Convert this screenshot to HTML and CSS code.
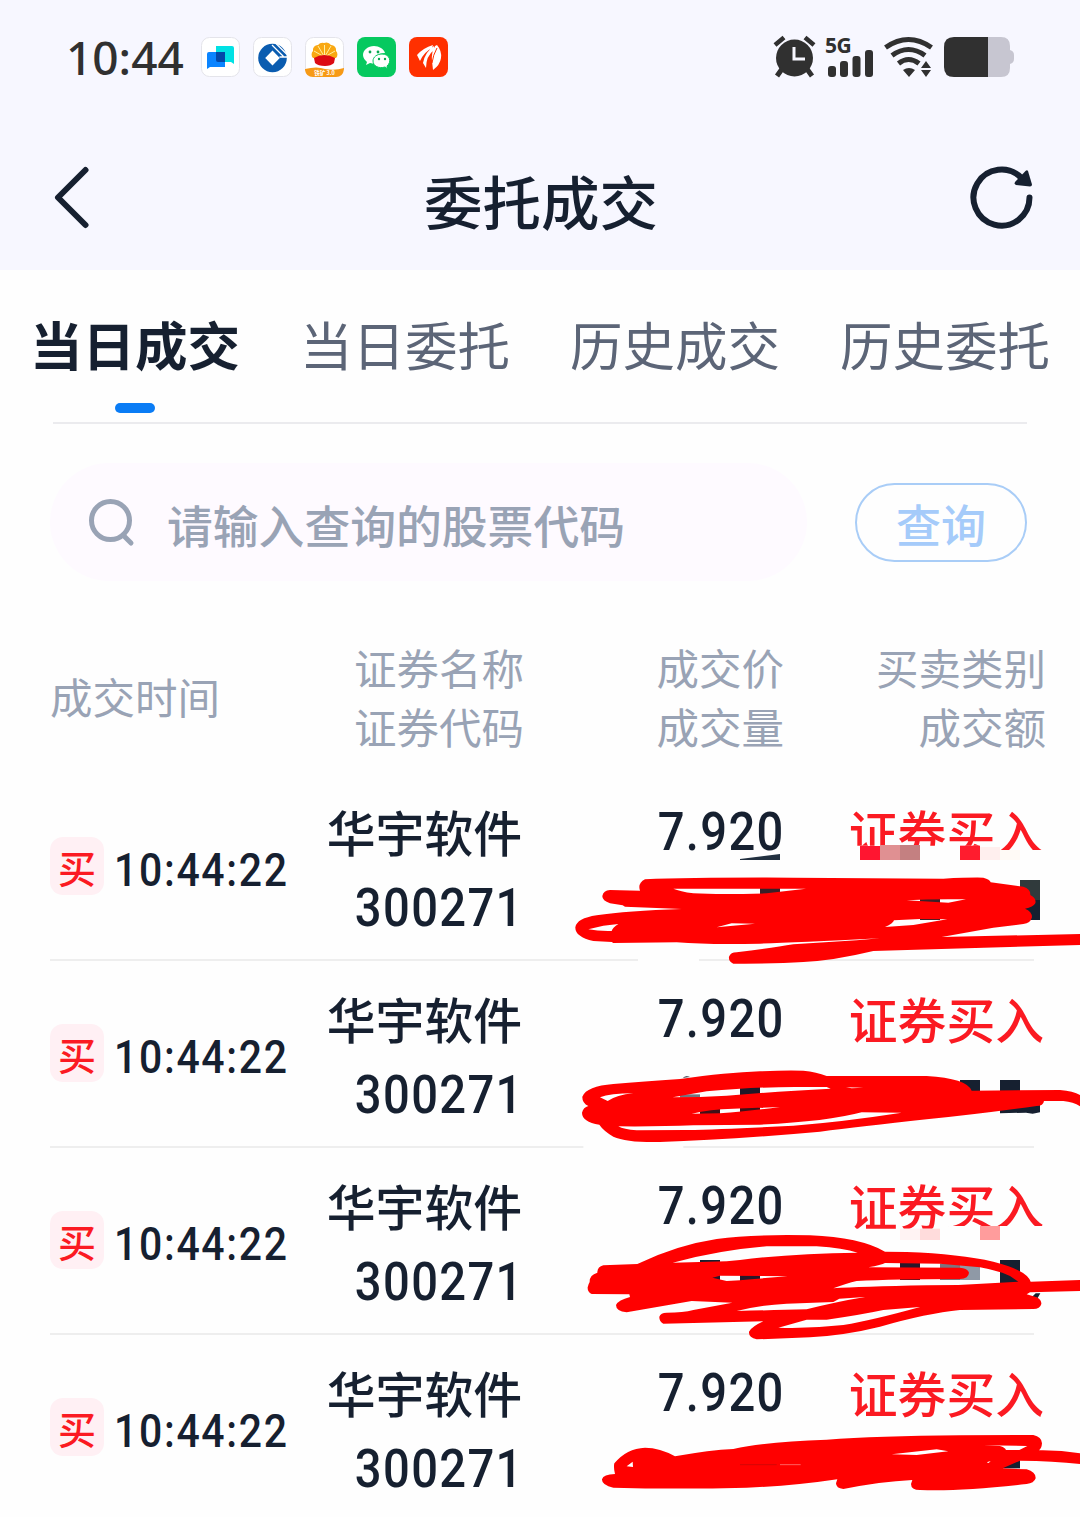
FILE: index.html
```html
<!DOCTYPE html>
<html lang="zh-CN">
<head>
<meta charset="utf-8">
<title>委托成交</title>
<link rel="stylesheet" href="styles.css">
</head>
<body>
<div class="screen">
  <header class="header">
    <div class="status">
      <span class="clock">10:44</span>
      <div class="apps">
        <svg class="app" viewBox="0 0 40 40"><rect x=".5" y=".5" width="38" height="39" rx="8" fill="#fff" stroke="#e4e4ea"/><path d="M15 9h16q2 0 2 2v16l-3-2H15z" fill="#00e1e4"/><path d="M8 15h16v15H9l-3 2V17q0-2 2-2z" fill="#0a84ff"/><path d="M15 15h9v10h-7q-2 0-2-2z" fill="#0348a8"/></svg>
        <svg class="app" viewBox="0 0 40 40"><rect x=".5" y=".5" width="38" height="39" rx="8" fill="#fff" stroke="#e4e4ea"/><circle cx="19.500" cy="21" r="14.300" fill="#0a5cb0"/><path d="M19.500 13.500l7.300 7.500-7.300 7.500-7.300-7.500z" fill="#fff"/><path d="M26.500 20H36M19 8L30.500 19.500M22.500 6L34 17.500" stroke="#fff" stroke-width="1.300"/></svg>
        <svg class="app" viewBox="0 0 40 40"><rect x=".5" y=".5" width="38" height="39" rx="8" fill="#fff" stroke="#e4e4ea"/><path d="M8 21a5 5 0 0 1 0-7 5 5 0 0 1 5-6 6 6 0 0 1 6-2 6 6 0 0 1 7 2 5 5 0 0 1 5 6 5 5 0 0 1 0 7z" fill="#f9a812"/><path d="M19.500 20V8M19.500 20L13 9M19.500 20L26 9M19.500 20L9 14M19.500 20L30 14" stroke="#fff0a0" stroke-width="1"/><path d="M9 21q10-6 21 0l-1 5q-3 3-9 3-7 0-10-3z" fill="#dc0b13"/><path d="M0 32q12-3 20 0 10 2 19-1v1q-1 8-8 8H8q-7 0-8-7z" fill="#f79a16"/><text x="19.500" y="38.300" class="app-text">铁矿 3.0</text></svg>
        <svg class="app" viewBox="0 0 40 40"><rect width="39" height="40" rx="8" fill="#06c95f"/><path d="M17 9c-6 0-11 4-11 9 0 3 2 5 4 7l-1 3 4-2 5 1c-2-7 3-11 10-11-1-4-6-7-11-7z" fill="#fff"/><path d="M25 17c-5 0-9 3-9 7 0 5 6 8 12 6l3 2-1-3c5-4 3-12-5-12z" fill="#fff" stroke="#06c95f"/><circle cx="13" cy="15" r="1.400" fill="#08a850"/><circle cx="21" cy="15" r="1.400" fill="#08a850"/><circle cx="22" cy="22" r="1.200" fill="#08a850"/><circle cx="28" cy="22" r="1.200" fill="#08a850"/></svg>
        <svg class="app" viewBox="0 0 40 40"><rect width="39" height="40" rx="8" fill="#ff3000"/><path d="M24 8Q14 11 8 18l3 6q4-9 12-13zM25 9q-9 6-11 17l3 5q0-12 8-18zM26 9q-4 7-3 15l1 9q7-5 8-12 1-7-4-13z" fill="#fff"/><path d="M28 11q-4 7-5 15" stroke="#ff3000" fill="none"/></svg>
      </div>
      <div class="indicators">
        <svg class="signals" width="244" height="48" viewBox="0 0 244 48">
          <g fill="#303030">
            <circle cx="21.500" cy="25" r="18.500"/>
            <path d="M2 12L11 4.500M32 4.500l9 7.500" stroke="#303030" stroke-width="4.500"/>
            <path d="M9 36l-5 7M34 36l5 7" stroke="#303030" stroke-width="5"/>
            <path d="M21 14v12h11" fill="none" stroke="#f7f7ff" stroke-width="3"/>
            <text x="52" y="20" class="net">5G</text>
            <rect x="55" y="33" width="8" height="11" rx="3"/><rect x="67" y="28" width="8" height="16" rx="3"/><rect x="79.500" y="23" width="8" height="21" rx="3"/><rect x="92" y="17" width="8" height="27" rx="3"/>
            <path d="M112.500 14.500q23-16 46 0M119 22.500q16.500-12 33 0M125.500 30.500q10-8 20.500 0" fill="none" stroke="#303030" stroke-width="5"/>
            <path d="M130 37q6-4 12 0l-6 7zM148 35l5-7 5 7zM148 37h10l-5 7z"/>
          </g>
          <path d="M215 4h13q9 0 9 9v4q4 1 4 5v4q0 4-4 5v4q0 9-9 9h-13z" fill="#c7c6d1"/>
          <path d="M181 4h34v40h-34q-10 0-10-10V14q0-10 10-10z" fill="#303030"/>
        </svg>
      </div>
    </div>
    <div class="titlebar">
      <svg class="back" width="40" height="64" viewBox="0 0 40 64"><path d="M34.500 4L7 31.500 34.500 59" fill="none" stroke="#162030" stroke-width="6" stroke-linecap="round" stroke-linejoin="round"/></svg>
      <h1 class="title">委托成交</h1>
      <svg class="refresh" width="68" height="68" viewBox="0 0 68 68"><path d="M62.500 33.500A28 28 0 1 1 54.500 14" fill="none" stroke="#162030" stroke-width="6" stroke-linecap="round"/><path d="M61 7l4 13.500q0 2-2 2l-14-1.500q-2-1-1-3L58.500 7q1.500-1.500 2.500 0z" fill="#162030"/></svg>
    </div>
  </header>

  <nav class="tabs">
    <a class="tab active">当日成交</a>
    <a class="tab">当日委托</a>
    <a class="tab">历史成交</a>
    <a class="tab">历史委托</a>
  </nav>

  <div class="search">
    <div class="field">
      <svg width="48" height="50" viewBox="0 -1 48 50"><circle cx="22.500" cy="22.500" r="19" fill="none" stroke="#99a3b5" stroke-width="5"/><path d="M35 37l8 8" stroke="#99a3b5" stroke-width="5" stroke-linecap="round"/></svg>
      <span class="placeholder">请输入查询的股票代码</span>
    </div>
    <button class="query">查询</button>
  </div>

  <div class="cols head">
    <div class="left">成交时间</div>
    <div>证券名称<br>证券代码</div>
    <div>成交价<br>成交量</div>
    <div>买卖类别<br>成交额</div>
  </div>

  <main>
    <section class="cols row">
      <div class="when"><span class="badge">买</span><span class="time">10:44:22</span></div>
      <div class="cell"><span class="name">华宇软件</span><span class="num code">300271</span></div>
      <div class="cell"><span class="num">7.920</span></div>
      <div class="cell"><span class="name side">证券买入</span></div>
      <svg class="scribble" viewBox="0 -48 1560 561">
        <path d="M860 167H1300V180H1450V215H860zM234 503h183v14H234z" fill="#fefefe"/>
        <path d="M540 207L660 192V210H540z" fill="#223040"/>
        <path d="M900 168h60v42h-60z" fill="#ff1530"/><path d="M960 165h60v45h-60z" fill="#e09092"/><path d="M1020 165h60v45h-60z" fill="#c48081"/><path d="M1200 167h60v43h-60z" fill="#ff1c2e"/><path d="M1260 171h60v39h-60z" fill="#ffefee"/><path d="M1320 180h60v30h-60z" fill="#fffaf6"/>
        <path d="M1380 270h60v60h-60z" fill="#303a3c"/><path d="M1380 330h60v60h-60z" fill="#162030"/><path d="M600 290h60v25h-60zM1080 320h60v70h-60z" fill="#3a2028"/>
        <path class="ink" d="M255 268Q400 262 700 263L1150 266Q1230 262 1270 263Q1290 268 1292 277L1390 290Q1412 296 1411 315Q1430 325 1426 340Q1420 352 1395 356Q1416 364 1416 382Q1412 400 1390 402L1300 413 1145 441 1560 432V465L940 483Q820 512 730 516Q640 522 520 521Q505 515 507 500Q512 487 530 487Q640 473 700 463L890 451 960 445Q700 458 600 461Q450 465 350 457L160 459 155 456 100 453Q45 440 46 412Q50 385 110 376Q200 362 365 357L195 350 188 346 150 340Q126 332 127 318Q130 302 150 300L240 302Q232 280 255 268ZM340 296H738L620 310Q480 314 400 310Q360 304 340 296ZM85 418Q130 405 175 402Q158 412 155 423Q115 424 85 418ZM470 412L515 400 585 401ZM1040 331Q1120 326 1218 328L1165 338ZM975 411Q1000 400 1002 391L1080 387 1162 388 1060 405Z"/>
      </svg>
    </section>
    <section class="cols row">
      <div class="when"><span class="badge">买</span><span class="time">10:44:22</span></div>
      <div class="cell"><span class="name">华宇软件</span><span class="num code">300271</span></div>
      <div class="cell"><span class="num">7.920</span></div>
      <div class="cell"><span class="name side">证券买入</span></div>
      <svg class="scribble" viewBox="0 -57 1560 561">
        <path d="M70 494h300v12H70z" fill="#fefefe"/>
        <path d="M1200 300h60v40h-60zM1320 300h60v40h-60zM1320 365h120v32l-22 4-20-3-78 2zM368 293q10-8 22-2z" fill="#162030"/><path d="M360 343h60v10h-60z" fill="#707580"/><path d="M540 320h60v25h-60z" fill="#201828"/><path d="M420 385h60v20h-60zM540 380h60v20h-60z" fill="#401018"/>
        <path class="ink" d="M160 312Q250 305 360 297Q500 278 600 274Q680 270 730 272Q770 276 800 288H1100Q1220 295 1235 332L1500 330Q1540 333 1560 345V379Q1540 366 1510 363H1452Q1450 378 1430 378Q1250 403 1100 418Q900 440 780 455Q500 480 300 486Q200 488 160 470Q130 452 118 434Q66 425 66 398Q70 382 85 378Q66 370 67 350Q80 318 160 312ZM120 352Q150 340 220 340Q170 345 143 363ZM338 352L440 334Q600 320 720 321H800L812 326Q640 335 500 347L420 351ZM858 322L910 323 875 325ZM395 401Q450 387 520 386L660 381Q560 395 480 400ZM175 439Q300 440 400 436L600 434Q800 425 905 397L1025 398Q850 425 700 437Q500 448 380 450L230 451Q190 448 175 439Z"/>
      </svg>
    </section>
    <section class="cols row">
      <div class="when"><span class="badge">买</span><span class="time">10:44:22</span></div>
      <div class="cell"><span class="name">华宇软件</span><span class="num code">300271</span></div>
      <div class="cell"><span class="num">7.920</span></div>
      <div class="cell"><span class="name side">证券买入</span></div>
      <svg class="scribble" viewBox="0 -66 1560 561">
        <path d="M860 176H1165V168H1450V212H860z" fill="#fefefe"/>
        <path d="M1020 176h60v34h-60z" fill="#fff3f3"/><path d="M1080 176h60v34h-60z" fill="#ffdcdc"/><path d="M1260 168h60v42h-60z" fill="#ff9c9c"/>
        <path d="M420 270h60v20h-60zM540 270h60v5h-60zM1320 270h60v70h-60zM1415 382l12-12h14l-8 14z" fill="#162030"/><path d="M420 315h60v20h-60zM540 315h60v20h-60zM1020 275h60v55h-60z" fill="#28182a"/><path d="M1140 280h60v50h-60z" fill="#7d747e"/><path d="M1200 285h60v45h-60z" fill="#8f99a6"/>
        <path class="ink" d="M130 286L232 282Q350 225 470 207Q580 192 750 196Q900 202 975 245L1040 246Q1200 252 1300 275Q1400 300 1412 335L1560 330V363L1410 367 1400 373 1430 382Q1445 390 1444 402Q1440 417 1420 417L1200 420Q1100 430 960 470Q860 495 750 502L590 508Q565 502 567 485Q575 470 610 454L310 461Q297 455 298 440Q302 428 320 428Q370 428 400 420L517 398 395 393 200 427Q168 424 168 405Q175 390 210 381L208 373 95 372Q82 366 83 352Q86 340 89 336Q88 315 112 308Q112 290 130 286ZM338 278Q480 240 620 229H770Q850 234 893 248Q700 250 540 270L500 274ZM457 323L480 317 683 319Q600 325 540 331L500 333ZM925 292Q965 285 975 279L1140 281 1260 292Q1320 303 1350 318L1375 335 1195 345 1100 346Q900 350 820 355Q860 340 890 333Q1000 327 1200 327Q1226 325 1227 308Q1222 294 1200 293ZM838 386L915 381Q830 395 740 418Q650 420 530 423Q600 405 680 401L820 396ZM655 473L740 449H800Q900 435 970 420L1080 411Q940 450 850 465Q750 476 655 473Z"/>
      </svg>
    </section>
    <section class="cols row">
      <div class="when"><span class="badge">买</span><span class="time">10:44:22</span></div>
      <div class="cell"><span class="name">华宇软件</span><span class="num code">300271</span></div>
      <div class="cell"><span class="num">7.920</span></div>
      <div class="cell"><span class="name side">证券买入</span></div>
      <svg class="scribble" viewBox="0 -75 1560 561">
        <path d="M1320 300h60v25h-60z" fill="#162030"/>
        <path class="ink" d="M345 289Q450 270 520 267Q620 245 800 239Q950 228 1200 226L1420 225Q1445 230 1446 250Q1445 265 1437 271Q1500 270 1560 280V312Q1480 303 1380 302L1328 325 1400 328Q1428 336 1427 355Q1422 370 1400 372Q1200 395 1080 390Q1053 390 1053 372L1057 360Q960 365 850 387Q828 385 828 370L832 358Q700 378 560 383Q350 388 160 383Q125 375 126 358Q130 343 165 342Q160 320 163 310Q200 265 255 263Q300 263 345 289ZM200 319L218 305 219 321ZM995 283L1130 268 1165 274 1070 285ZM1270 256L1402 258 1378 270H1338Q1335 262 1320 258ZM1280 307L1292 303 1286 309Z"/>
        <path d="M540 314h110" stroke="#c00808" stroke-width="2"/><path d="M660 314h62" stroke="#ff9090" stroke-width="2"/>
      </svg>
    </section>
  </main>
</div>
</body>
</html>
```
FILE: styles.css
```css
* { box-sizing: border-box; }
body {
  margin: 0;
  background: #fefefe;
  color: #162030;
  font-family: "Noto Sans CJK SC", sans-serif;
}
.screen { width: 1080px; height: 1517px; overflow: hidden; }

.header { height: 270px; background: #f7f7ff; }
.status { height: 114px; padding: 0 63px 0 66px; display: flex; align-items: center; }
.clock {
  width: 135px;
  font: 500 46px/60px "Noto Sans", sans-serif;
  color: #303030;
}
.apps { display: flex; gap: 12px; }
.app { width: 40px; height: 40px; display: block; }
.app-text { font-size: 5.500px; font-weight: 700; fill: #fff; text-anchor: middle; }
.indicators { margin-left: auto; display: flex; }
.signals { overflow: visible; }
.net { font: 700 21px "Noto Sans", sans-serif; letter-spacing: -0.5px; }

.titlebar {
  height: 156px;
  padding: 12px 45px 0 51px;
  display: flex;
  align-items: center;
  justify-content: space-between;
}
.back { margin-right: 24px; }
.title { margin: 0; padding-top: 4px; font-size: 58.5px; font-weight: 500; line-height: 80px; }

.tabs {
  height: 154px;
  margin: 0 30px;
  display: flex;
  justify-content: space-between;
  font-size: 52.5px;
  line-height: 146px;
  color: #5c6577;
  position: relative;
  white-space: nowrap;
}
.tabs::after {
  content: "";
  position: absolute;
  left: 23px; right: 23px; bottom: 0;
  height: 2px;
  background: #ebebee;
}
.tab { position: relative; }
.active { color: #162030; font-weight: 700; }
.active::after {
  content: "";
  position: absolute;
  left: 85px; top: 133px;
  width: 40px; height: 10px;
  border-radius: 5px;
  background: #0a7cf5;
}

.search {
  height: 196px;
  padding: 0 53px 0 50px;
  display: flex;
  align-items: center;
  justify-content: space-between;
}
.field {
  width: 757px; height: 118px;
  border-radius: 59px;
  background: #fefaff;
  padding-left: 38px;
  display: flex;
  align-items: center;
  gap: 31px;
}
.placeholder { padding-top: 3px; font-size: 45.8px; font-weight: 500; color: #99a3b5; }
.query {
  width: 172px; height: 79px;
  padding: 3px 0 0;
  border: 2px solid #a9cdf7;
  border-radius: 40px;
  background: transparent;
  color: #a5cbfa;
  font: 500 45px/70px "Noto Sans CJK SC", sans-serif;
}

.cols {
  padding-left: 50px;
  display: grid;
  grid-template-columns: 250px 224px 260px 262px;
}
.head {
  height: 154px;
  padding-bottom: 3px;
  align-items: center;
  text-align: right;
  font-size: 42.500px;
  line-height: 59px;
  color: #99a3b5;
}
.left { text-align: left; }

.row { height: 187px; position: relative; }
.row::after {
  content: "";
  position: absolute;
  left: 50px; right: 46px; bottom: 0;
  height: 2px;
  background: #eee;
}
.when { display: flex; align-items: center; gap: 10px; white-space: nowrap; }
.badge {
  flex: none;
  width: 54px; height: 58px;
  margin-top: -3px;
  border-radius: 13px;
  background: #fff0f4;
  color: #fb1a22;
  font-size: 38px;
  font-weight: 500;
  line-height: 60px;
  text-align: center;
}
.time {
  padding-top: 4px;
  font: 500 46px/60px Roboto, sans-serif;
  letter-spacing: 1.9px;
  transform: scaleX(0.89);
  transform-origin: left;
}
.cell { padding-top: 19px; display: flex; flex-direction: column; align-items: flex-end; }
.name {
  margin-right: 2px;
  font-size: 48.8px;
  font-weight: 500;
  line-height: 75px;
  white-space: nowrap;
}
.side { color: #fb1a22; }
.num {
  margin-right: -1px;
  padding-top: 2px;
  font: 500 53px/75px Roboto, sans-serif;
  letter-spacing: 1.5px;
  transform: scaleX(0.89);
  transform-origin: right;
}
.code { margin-right: 0; padding-top: 3px; }
.scribble {
  position: absolute;
  z-index: 1;
  left: 560px; top: 0;
  width: 520px; height: 187px;
  overflow: visible;
}
.ink { fill: #f00; fill-rule: evenodd; }
```
